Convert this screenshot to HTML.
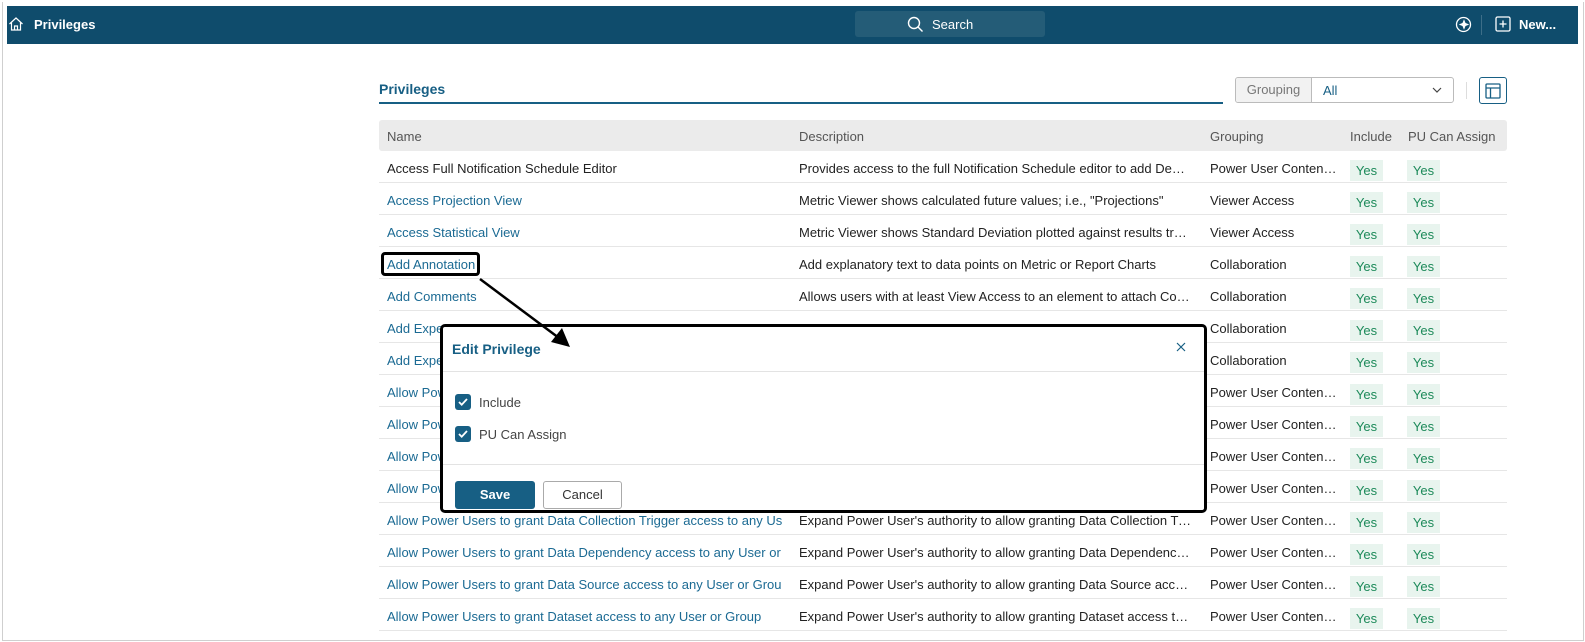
<!DOCTYPE html>
<html><head><style>
*{box-sizing:border-box;margin:0;padding:0}
body{width:1585px;height:642px;background:#fff;font-family:"Liberation Sans",sans-serif;font-size:13px;color:#222;position:relative;overflow:hidden}
.abs{position:absolute}
.frame{left:2px;top:2px;width:1582px;height:639px;border:1px solid #cfcfcf;border-top:none}
.nav{left:7px;top:6px;width:1571px;height:38px;background:#0f4c6c;color:#fff}
.row{position:absolute;left:379px;width:1128px;height:32px;border-bottom:1px solid #e6e6e6}
.row span{position:absolute;top:10px;white-space:nowrap;overflow:hidden;text-overflow:ellipsis}
.n{left:8px;width:395px;color:#1b6a93;text-overflow:clip!important}
.n.k{color:#222}
.d{left:420px;width:393px}
.g{left:831px;width:130px}
.y{display:block;position:absolute;top:9px;width:33px;height:21px;background:#e8f4ee;color:#1d8a5a;text-align:center;line-height:22px;font-style:normal}
</style></head><body>
<div class="abs frame"></div>
<div class="abs nav">
 <svg class="abs" style="left:1px;top:10px" width="16" height="16" viewBox="0 0 16 16" fill="none" stroke="#fff" stroke-width="1.2"><path d="M1.5 8L8 2l6.5 6M3.5 6.5V14h9V6.5M6.5 14v-4h3v4"/></svg>
 <div class="abs" style="left:27px;top:11px;font-weight:bold;font-size:13px">Privileges</div>
 <div class="abs" style="left:848px;top:5px;width:190px;height:26px;background:#245c77;border-radius:3px"></div>
 <svg class="abs" style="left:900px;top:10px" width="17" height="17" viewBox="0 0 17 17" fill="none" stroke="#fff" stroke-width="1.4"><circle cx="7" cy="7" r="5.5"/><path d="M11 11l4.5 4.5"/></svg>
 <div class="abs" style="left:925px;top:11px;font-size:13px">Search</div>
 <svg class="abs" style="left:1448px;top:10px" width="17" height="17" viewBox="0 0 17 17" fill="none" stroke="#fff" stroke-width="1.3"><circle cx="8.5" cy="8.5" r="7"/><path d="M9 5l1 2.5 2.5 1-2.5 1L9 12l-1-2.5-2.5-1 2.5-1z" fill="#fff"/></svg>
 <div class="abs" style="left:1474px;top:9px;width:1px;height:20px;background:#3d6e88"></div>
 <svg class="abs" style="left:1488px;top:10px" width="16" height="16" viewBox="0 0 16 16" fill="none" stroke="#fff" stroke-width="1.3"><rect x="1" y="1" width="14" height="14" rx="1.5"/><path d="M8 4.5v7M4.5 8h7"/></svg>
 <div class="abs" style="left:1512px;top:11px;font-weight:bold">New...</div>
</div>

<div class="abs" style="left:379px;top:81px;font-weight:bold;font-size:14px;color:#175f84">Privileges</div>
<div class="abs" style="left:379px;top:102px;width:844px;height:2px;background:#175f84"></div>
<div class="abs" style="left:1235px;top:77px;width:219px;height:26px;border:1px solid #bbb;border-radius:3px;overflow:hidden">
 <div class="abs" style="left:0;top:0;width:76px;height:24px;background:#f2f2f2;border-right:1px solid #bbb;color:#777;text-align:center;line-height:24px">Grouping</div>
 <div class="abs" style="left:87px;top:5px;color:#175f84">All</div>
 <svg class="abs" style="left:196px;top:8px" width="10" height="8" viewBox="0 0 10 8" fill="none" stroke="#444" stroke-width="1.2"><path d="M1 2l4 4 4-4"/></svg>
</div>
<div class="abs" style="left:1466px;top:82px;width:1px;height:17px;background:#ddd"></div>
<div class="abs" style="left:1479px;top:77px;width:28px;height:27px;border:1.5px solid #175f84;border-radius:3px"></div>
<svg class="abs" style="left:1485px;top:83px" width="16" height="16" viewBox="0 0 16 16" fill="none" stroke="#175f84" stroke-width="1.3"><rect x="1" y="1" width="14" height="14" rx="1"/><path d="M1 5h14M5.5 5v10"/></svg>

<div class="abs" style="left:379px;top:120px;width:1128px;height:31px;background:#ebebeb;border-radius:3px;color:#555">
 <span class="abs" style="left:8px;top:9px">Name</span>
 <span class="abs" style="left:420px;top:9px">Description</span>
 <span class="abs" style="left:831px;top:9px">Grouping</span>
 <span class="abs" style="left:971px;top:9px">Include</span>
 <span class="abs" style="left:1029px;top:9px">PU Can Assign</span>
</div>

<div class="row" style="top:151px"><span class="n k">Access Full Notification Schedule Editor</span><span class="d">Provides access to the full Notification Schedule editor to add Dependencies</span><span class="g">Power User Content Admin</span><i class="y" style="left:971px">Yes</i><i class="y" style="left:1028px">Yes</i></div>
<div class="row" style="top:183px"><span class="n">Access Projection View</span><span class="d">Metric Viewer shows calculated future values; i.e., "Projections"</span><span class="g">Viewer Access</span><i class="y" style="left:971px">Yes</i><i class="y" style="left:1028px">Yes</i></div>
<div class="row" style="top:215px"><span class="n">Access Statistical View</span><span class="d">Metric Viewer shows Standard Deviation plotted against results trends</span><span class="g">Viewer Access</span><i class="y" style="left:971px">Yes</i><i class="y" style="left:1028px">Yes</i></div>
<div class="row" style="top:247px"><span class="n">Add Annotation</span><span class="d">Add explanatory text to data points on Metric or Report Charts</span><span class="g">Collaboration</span><i class="y" style="left:971px">Yes</i><i class="y" style="left:1028px">Yes</i></div>
<div class="row" style="top:279px"><span class="n">Add Comments</span><span class="d">Allows users with at least View Access to an element to attach Comments</span><span class="g">Collaboration</span><i class="y" style="left:971px">Yes</i><i class="y" style="left:1028px">Yes</i></div>
<div class="row" style="top:311px"><span class="n">Add Expert Notes</span><span class="d"></span><span class="g">Collaboration</span><i class="y" style="left:971px">Yes</i><i class="y" style="left:1028px">Yes</i></div>
<div class="row" style="top:343px"><span class="n">Add Expert Tips</span><span class="d"></span><span class="g">Collaboration</span><i class="y" style="left:971px">Yes</i><i class="y" style="left:1028px">Yes</i></div>
<div class="row" style="top:375px"><span class="n">Allow Power Users</span><span class="d"></span><span class="g">Power User Content Admin</span><i class="y" style="left:971px">Yes</i><i class="y" style="left:1028px">Yes</i></div>
<div class="row" style="top:407px"><span class="n">Allow Power Users</span><span class="d"></span><span class="g">Power User Content Admin</span><i class="y" style="left:971px">Yes</i><i class="y" style="left:1028px">Yes</i></div>
<div class="row" style="top:439px"><span class="n">Allow Power Users</span><span class="d"></span><span class="g">Power User Content Admin</span><i class="y" style="left:971px">Yes</i><i class="y" style="left:1028px">Yes</i></div>
<div class="row" style="top:471px"><span class="n">Allow Power Users</span><span class="d"></span><span class="g">Power User Content Admin</span><i class="y" style="left:971px">Yes</i><i class="y" style="left:1028px">Yes</i></div>
<div class="row" style="top:503px"><span class="n">Allow Power Users to grant Data Collection Trigger access to any User or Group</span><span class="d">Expand Power User's authority to allow granting Data Collection Trigger access</span><span class="g">Power User Content Admin</span><i class="y" style="left:971px">Yes</i><i class="y" style="left:1028px">Yes</i></div>
<div class="row" style="top:535px"><span class="n">Allow Power Users to grant Data Dependency access to any User or Group</span><span class="d">Expand Power User's authority to allow granting Data Dependency access</span><span class="g">Power User Content Admin</span><i class="y" style="left:971px">Yes</i><i class="y" style="left:1028px">Yes</i></div>
<div class="row" style="top:567px"><span class="n">Allow Power Users to grant Data Source access to any User or Group</span><span class="d">Expand Power User's authority to allow granting Data Source access to any</span><span class="g">Power User Content Admin</span><i class="y" style="left:971px">Yes</i><i class="y" style="left:1028px">Yes</i></div>
<div class="row" style="top:599px"><span class="n">Allow Power Users to grant Dataset access to any User or Group</span><span class="d">Expand Power User's authority to allow granting Dataset access to any User</span><span class="g">Power User Content Admin</span><i class="y" style="left:971px">Yes</i><i class="y" style="left:1028px">Yes</i></div>

<div class="abs" style="left:381px;top:252px;width:99px;height:24px;border:3px solid #000;border-radius:4px"></div>

<div class="abs" style="left:440px;top:324px;width:767px;height:189px;background:#fff;border:3px solid #000;border-radius:5px">
 <div class="abs" style="left:9px;top:14px;font-weight:bold;font-size:14px;color:#175f84">Edit Privilege</div>
 <svg class="abs" style="left:733px;top:15px" width="10" height="10" viewBox="0 0 10 10" stroke="#175f84" stroke-width="1.2"><path d="M1 1l8 8M9 1L1 9"/></svg>
 <div class="abs" style="left:0;top:44px;width:761px;height:1px;background:#e3e3e3"></div>
 <div class="abs" style="left:12px;top:67px;width:16px;height:16px;background:#175f84;border-radius:3px"></div>
 <svg class="abs" style="left:15px;top:71px" width="10" height="8" viewBox="0 0 10 8" fill="none" stroke="#fff" stroke-width="1.8"><path d="M1 4l2.7 2.7L9 1"/></svg>
 <div class="abs" style="left:36px;top:68px;color:#444">Include</div>
 <div class="abs" style="left:12px;top:99px;width:16px;height:16px;background:#175f84;border-radius:3px"></div>
 <svg class="abs" style="left:15px;top:103px" width="10" height="8" viewBox="0 0 10 8" fill="none" stroke="#fff" stroke-width="1.8"><path d="M1 4l2.7 2.7L9 1"/></svg>
 <div class="abs" style="left:36px;top:100px;color:#444">PU Can Assign</div>
 <div class="abs" style="left:0;top:137px;width:761px;height:1px;background:#e3e3e3"></div>
 <div class="abs" style="left:12px;top:154px;width:80px;height:28px;background:#175f84;border-radius:3px;color:#fff;font-weight:bold;text-align:center;line-height:28px">Save</div>
 <div class="abs" style="left:100px;top:154px;width:79px;height:28px;border:1px solid #aaa;border-radius:3px;color:#333;text-align:center;line-height:26px">Cancel</div>
</div>

<svg class="abs" style="left:0;top:0" width="1585" height="642"><path d="M480 279L559 338" stroke="#000" stroke-width="2.5"/><path d="M570 347L551 342L562 328Z" fill="#000"/></svg>
</body></html>
